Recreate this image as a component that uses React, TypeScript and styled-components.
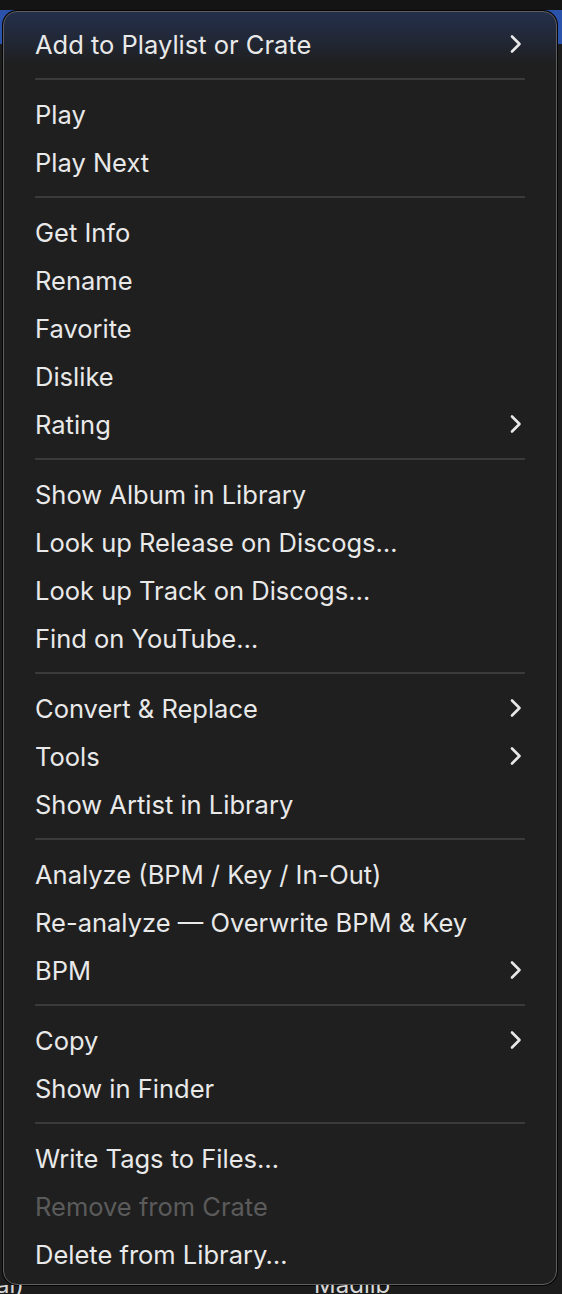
import React from "react";
import styled, { createGlobalStyle } from "styled-components";

const GlobalStyle = createGlobalStyle`
  html, body {
    margin: 0;
    padding: 0;
    height: 1294px;
    overflow: hidden;
    background:
      linear-gradient(
        to bottom,
        #141414 0px,
        #141414 10px,
        #2c53ab 10px,
        #2c53ab 44px,
        #1c1c1c 44px
      );
  }
  body {
    font-family: Inter, "Noto Sans", "Liberation Sans", sans-serif;
    -webkit-font-smoothing: antialiased;
  }
`;

const Page = styled.div`
  display: flex;
  flex-direction: column;
  width: 562px;
  height: 1294px;
`;

const Menu = styled.div`
  box-sizing: border-box;
  width: 554px;
  margin: 11px 0 0 3px;
  padding: 8px 0 6px;
  border-radius: 14px;
  border: 1px solid #5f5f5f;
  box-shadow: 0 0 0 1px #050505;
  background:
    linear-gradient(
      to bottom,
      rgba(38, 60, 110, 0.55) 0px,
      rgba(38, 60, 110, 0.35) 22px,
      rgba(30, 30, 30, 0) 52px
    ),
    #1f1f1f;
  display: flex;
  flex-direction: column;
`;

const Item = styled.div<{ $disabled?: boolean }>`
  display: flex;
  align-items: center;
  justify-content: space-between;
  height: 48px;
  padding: 0 34px 0 31px;
  font-size: 25.5px;
  letter-spacing: 0;
  color: ${({ $disabled }) => ($disabled ? "#5b5b5b" : "#e9e9e9")};
  white-space: nowrap;
`;

const Separator = styled.div`
  height: 22px;
  display: flex;
  align-items: center;
  padding: 0 31px;

  &::after {
    content: "";
    flex: 1;
    height: 2px;
    background: #3b3b3b;
  }
`;

const Footer = styled.div`
  flex: 1;
  overflow: hidden;
  font-size: 24px;
  color: #d8d8d8;
  display: flex;
`;

const FooterText = styled.span<{ $left: number }>`
  margin-left: ${({ $left }) => $left}px;
  margin-top: -12px;
  line-height: 24px;
`;

const Chevron = () => (
  <svg width="13" height="20" viewBox="0 0 13 20" fill="none">
    <polyline
      points="3,2.5 10.5,10 3,17.5"
      stroke="#e8e8e8"
      strokeWidth="2.6"
      strokeLinecap="round"
      strokeLinejoin="round"
    />
  </svg>
);

type Entry = { label: string; sub?: boolean; disabled?: boolean } | "sep";

const entries: Entry[] = [
  { label: "Add to Playlist or Crate", sub: true },
  "sep",
  { label: "Play" },
  { label: "Play Next" },
  "sep",
  { label: "Get Info" },
  { label: "Rename" },
  { label: "Favorite" },
  { label: "Dislike" },
  { label: "Rating", sub: true },
  "sep",
  { label: "Show Album in Library" },
  { label: "Look up Release on Discogs…" },
  { label: "Look up Track on Discogs…" },
  { label: "Find on YouTube…" },
  "sep",
  { label: "Convert & Replace", sub: true },
  { label: "Tools", sub: true },
  { label: "Show Artist in Library" },
  "sep",
  { label: "Analyze (BPM / Key / In-Out)" },
  { label: "Re-analyze — Overwrite BPM & Key" },
  { label: "BPM", sub: true },
  "sep",
  { label: "Copy", sub: true },
  { label: "Show in Finder" },
  "sep",
  { label: "Write Tags to Files…" },
  { label: "Remove from Crate", disabled: true },
  { label: "Delete from Library…" },
];

export default function App() {
  return (
    <Page>
      <GlobalStyle />
      <Menu>
        {entries.map((e, i) =>
          e === "sep" ? (
            <Separator key={i} />
          ) : (
            <Item key={i} $disabled={e.disabled}>
              <span>{e.label}</span>
              {e.sub && <Chevron />}
            </Item>
          )
        )}
      </Menu>
      <Footer>
        <FooterText $left={-4}>al)</FooterText>
        <FooterText $left={290}>Madlib</FooterText>
      </Footer>
    </Page>
  );
}
